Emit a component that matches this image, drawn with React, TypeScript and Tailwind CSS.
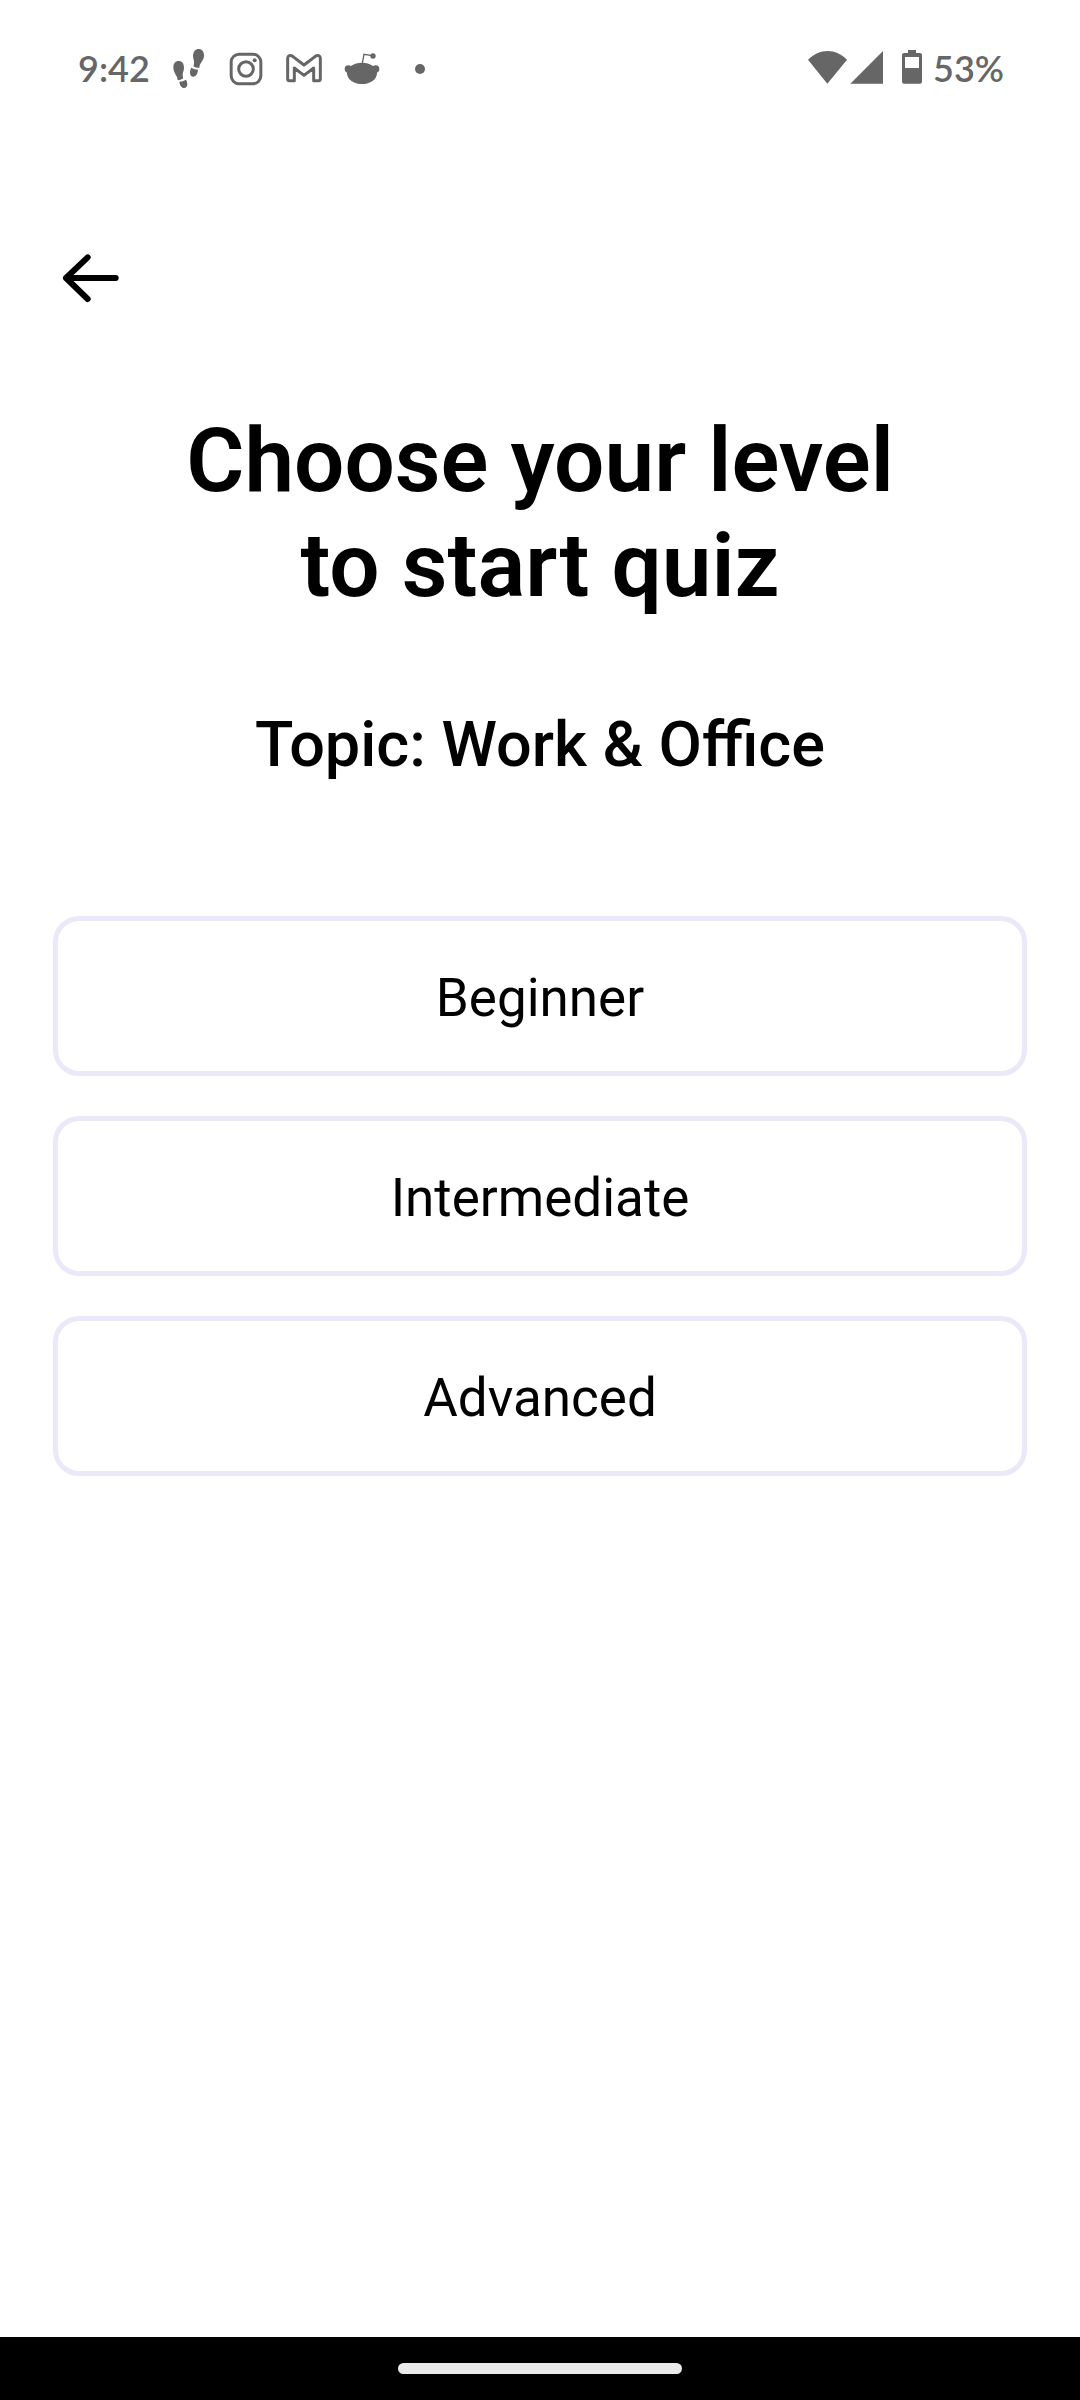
const levels = ["Beginner", "Intermediate", "Advanced"];

function StatusIcons() {
  return (
    <div className="flex items-center gap-[22px]">
      <svg width="36" height="42" viewBox="330 51 108 126" fill="currentColor" aria-label="Steps">
        <path d="M340 112C340 101 346 93 356 93C366 93 372 101 372 113C372 121 368 127 368 134C368 139 369 142 370 145C365 149 359 151 353 151C353 145 351 140 347 134C343 127 340 121 340 112Z" />
        <path d="M358 155C365 155 372 152 378 149C381 154 382 158 382 163C382 170 378 174 372 174C366 174 362 169 360 164C359 161 358 158 358 155Z" />
        <path d="M432 76C432 65 426 57 416 57C406 57 400 65 399 77C399 85 403 91 402 98C402 103 401 106 400 109C405 112 412 114 418 114C418 108 420 103 424 97C429 90 432 85 432 76Z" />
        <path d="M414 119C407 119 399 116 394 113C391 118 390 123 390 128C390 135 394 140 400 140C406 140 410 135 412 129C413 126 414 122 414 119Z" />
      </svg>
      <svg width="36" height="42" viewBox="54 51 108 126" fill="none" stroke="currentColor" strokeWidth="9" aria-label="Instagram">
        <rect x="63.5" y="72.5" width="89" height="89" rx="24" />
        <circle cx="108" cy="117" r="22" />
        <circle cx="134" cy="91" r="6" fill="currentColor" stroke="none" />
      </svg>
      <svg width="36" height="42" viewBox="228 51 108 126" fill="none" stroke="currentColor" strokeWidth="9" strokeLinejoin="round" aria-label="Gmail">
        <path d="M233 85C233 77 241 74 248 79L282 105L316 79C323 74 331 77 331 85V147Q331 152 326 152H311V114L282 136L253 114V152H238Q233 152 233 147Z" />
      </svg>
      <svg width="36" height="42" viewBox="402 51 108 126" fill="currentColor" aria-label="Reddit">
        <ellipse cx="456" cy="130" rx="45" ry="32" />
        <circle cx="415" cy="117" r="11" />
        <circle cx="497" cy="117" r="11" />
        <circle cx="489" cy="78" r="8" />
        <path d="M457 100L462 73L487 77" fill="none" stroke="currentColor" strokeWidth="4" />
      </svg>
      <svg width="36" height="42" viewBox="576 51 108 126" fill="currentColor" aria-label="More notifications">
        <circle cx="630" cy="117" r="15" />
      </svg>
    </div>
  );
}

function StatusBar() {
  return (
    <header className="flex h-[136px] items-center justify-between pr-[76px] pl-[78px] font-[Lato,sans-serif] text-[36px] leading-[42px] font-semibold text-[#666666]">
      <div className="flex items-center gap-5">
        <span>9:42</span>
        <StatusIcons />
      </div>
      <div className="flex items-center">
        <svg width="40" height="42" viewBox="54 51 120 126" fill="currentColor" aria-label="Wi-Fi">
          <path d="M54 89C88 54 138 54 171 89L112 161Z" />
        </svg>
        <svg className="ml-[2px]" width="34" height="42" viewBox="180 51 102 126" fill="currentColor" aria-label="Mobile signal">
          <path d="M279 63V161H181Z" />
        </svg>
        <svg className="mr-[11px] ml-[18px]" width="20" height="42" viewBox="336 51 60 126" fill="currentColor" aria-label="Battery">
          <path fillRule="evenodd" d="M354 60H378V69H390Q396 69 396 75V155Q396 161 390 161H342Q336 161 336 155V75Q336 69 342 69H354ZM345 81V114H387V81Z" />
        </svg>
        <span>53%</span>
      </div>
    </header>
  );
}

export default function App() {
  return (
    <div className="flex min-h-screen flex-col bg-white font-[Roboto,sans-serif] text-black">
      <StatusBar />
      <main className="flex flex-1 flex-col px-[53px]">
        <button type="button" aria-label="Back" className="mt-[102px] flex h-20 w-[76px] items-center justify-center">
          <svg width="60" height="60" viewBox="61 54 180 180" fill="none" stroke="currentColor" strokeWidth="18" strokeLinecap="round" strokeLinejoin="round">
            <path d="M225 144H76M141 82L76 144L141 207" />
          </svg>
        </button>
        <h1 className="mt-[90px] text-center text-[89px] leading-[105px] font-semibold">
          Choose your level
          <br />
          to start quiz
        </h1>
        <h2 className="mt-[90px] text-center text-[63px] leading-[74px] font-medium">Topic: Work &amp; Office</h2>
        <div className="mt-[134px] flex flex-col gap-10">
          {levels.map((level) => (
            <button
              key={level}
              type="button"
              className="h-40 rounded-[26px] border-[5px] border-[#eae9f9] pt-1 text-center text-[53px] leading-[62px]"
            >
              {level}
            </button>
          ))}
        </div>
      </main>
      <footer className="flex h-[63px] items-center justify-center bg-black">
        <div className="h-[11px] w-[284px] rounded-full bg-[#ebebeb]" />
      </footer>
    </div>
  );
}
